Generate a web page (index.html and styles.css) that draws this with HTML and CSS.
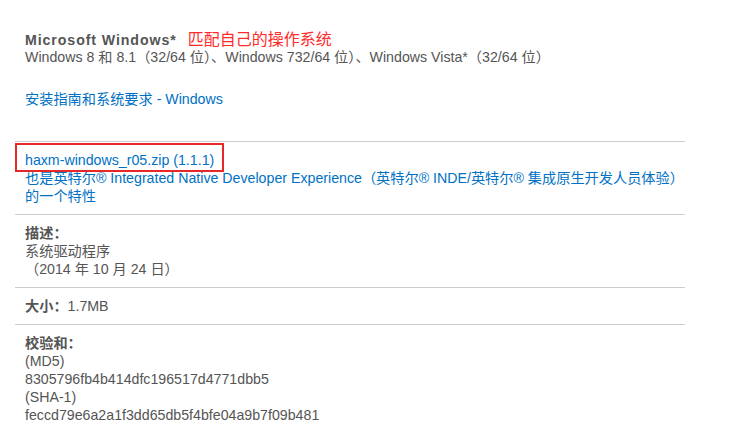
FILE: index.html
```html
<!DOCTYPE html>
<html lang="zh-CN">
<head>
<meta charset="utf-8">
<title>HAXM</title>
<link rel="stylesheet" href="styles.css">
</head>
<body>
<div class="page">
  <div class="section first">
    <div class="os-line"><span class="os-title">Microsoft Windows*</span><span class="note">匹配自己的操作系统</span></div>
    <div class="text">Windows 8 和 8.1（32/64 位）、Windows 732/64 位）、Windows Vista*（32/64 位）</div>
    <div class="link guide">安装指南和系统要求 - Windows</div>
  </div>
  <div class="section">
    <div class="file-wrap"><span class="link">haxm-windows_r05.zip (1.1.1)</span><span class="redbox"></span></div>
    <div class="link nowrap">也是英特尔® Integrated Native Developer Experience（英特尔® INDE/英特尔® 集成原生开发人员体验）</div>
    <div class="link">的一个特性</div>
  </div>
  <div class="section">
    <div class="label">描述：</div>
    <div class="text">系统驱动程序</div>
    <div class="text">（2014 年 10 月 24 日）</div>
  </div>
  <div class="section">
    <div class="text"><span class="label">大小：</span>1.7MB</div>
  </div>
  <div class="section">
    <div class="label">校验和：</div>
    <div class="text">(MD5)</div>
    <div class="text">8305796fb4b414dfc196517d4771dbb5</div>
    <div class="text">(SHA-1)</div>
    <div class="text">feccd79e6a2a1f3dd65db5f4bfe04a9b7f09b481</div>
  </div>
</div>
</body>
</html>
```

FILE: styles.css
```css
html, body {
  margin: 0;
  padding: 0;
  background: #fff;
}
body {
  font-family: "Liberation Sans", Arial, "Noto Sans CJK SC", sans-serif;
  font-size: 14.2px;
  line-height: 18px;
  color: #555;
}
.page {
  width: 670px;
  margin-left: 15px;
  padding-top: 28px;
}
.section {
  border-top: 1px solid #ccc;
  padding: 9px 10px 9px 10px;
}
.section.first {
  border-top: none;
  padding: 0 10px 33px 10px;
}
.os-line {
  height: 20px;
  line-height: 20px;
}
.os-title {
  font-weight: bold;
  color: #555;
  letter-spacing: 0.9px;
}
.note {
  color: #ff2a2a;
  font-size: 16px;
  margin-left: 11px;
  font-family: "Noto Sans CJK SC", sans-serif;
}
.guide {
  margin-top: 24px;
}
.link {
  color: #0071c5;
}
.nowrap {
  white-space: nowrap;
}
.label {
  font-weight: bold;
  color: #555;
}
.file-wrap {
  position: relative;
}
.redbox {
  position: absolute;
  left: -10px;
  top: -8px;
  width: 205px;
  height: 25px;
  border: 2px solid #e82828;
}
```
